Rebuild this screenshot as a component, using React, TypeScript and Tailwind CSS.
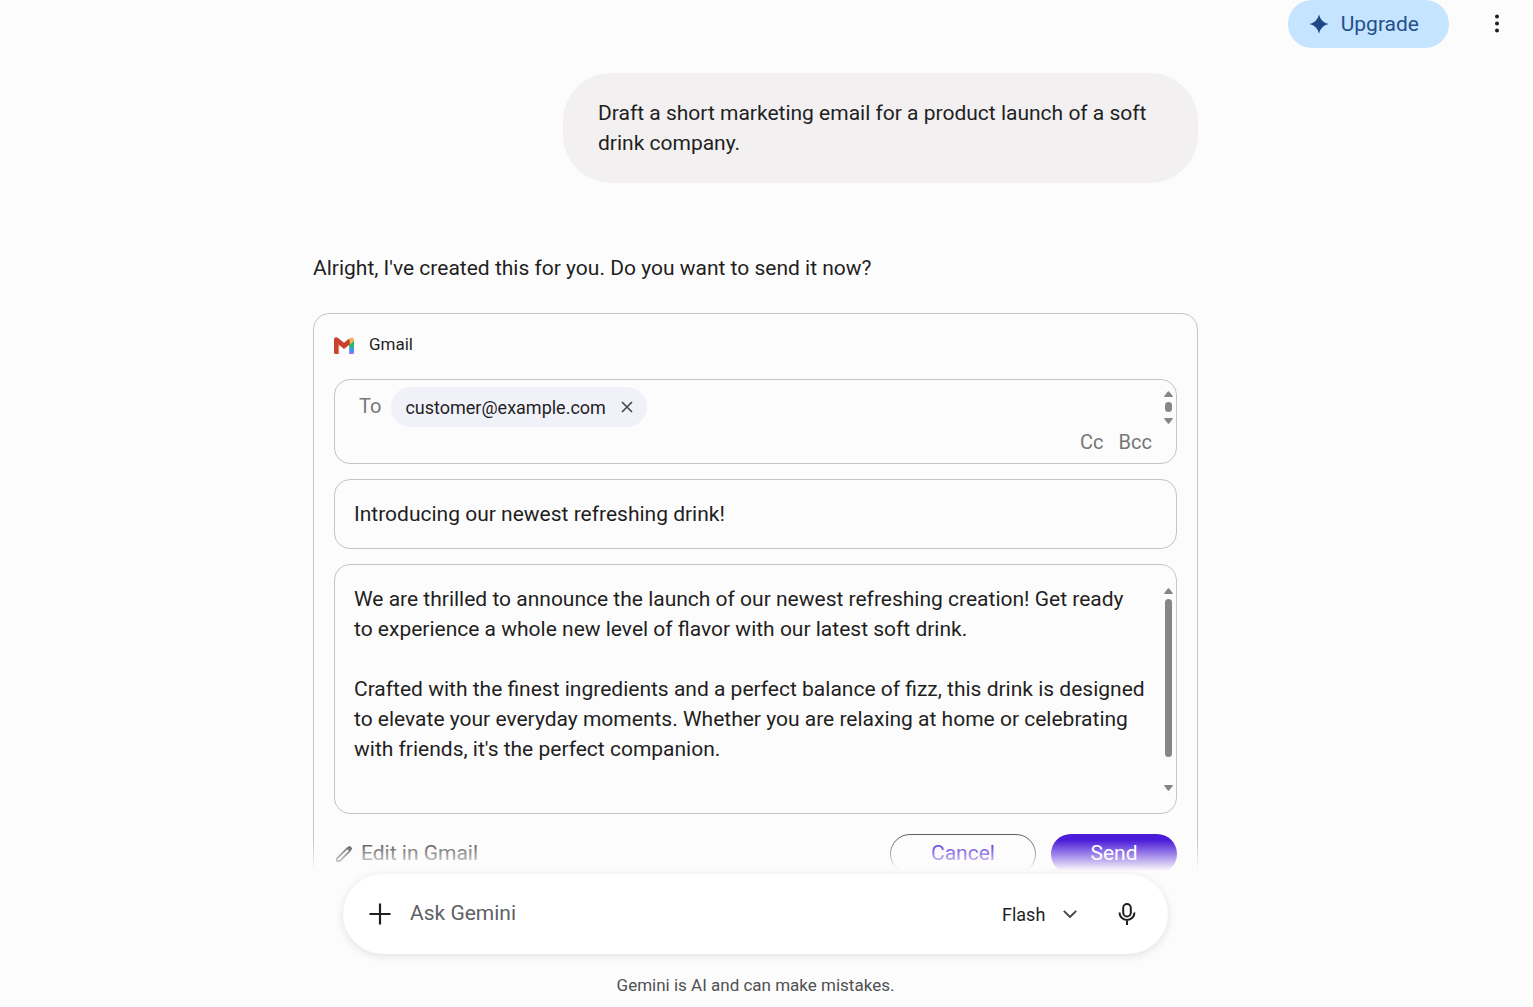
import { useState } from 'react';
import type { ReactNode } from 'react';

const BODY = `We are thrilled to announce the launch of our newest refreshing creation! Get ready to experience a whole new level of flavor with our latest soft drink.

Crafted with the finest ingredients and a perfect balance of fizz, this drink is designed to elevate your everyday moments. Whether you are relaxing at home or celebrating with friends, it's the perfect companion.`;

function GmailIcon() {
  return (
    <svg viewBox="0 0 20 17" className="h-[17px] w-5" aria-hidden="true">
      <path d="M3.800 7 5.200 8.200V17H3.800z" fill="#f0b27a" />
      <path d="M15.200 6.200 20 2.800V11h-4.800z" fill="#1fc063" />
      <path d="M15.200 10.500H20V15a2 2 0 0 1-2 2h-2.800z" fill="#4f8df0" />
      <path d="M16.200 15.200H20a1.900 1.900 0 0 1-2 1.800h-2.800z" fill="#9a6cf0" />
      <path d="M14 3.400 16.400 1a2.200 2.200 0 0 1 3.600 1.700c0 1-.3 1.600-1 2.200l-3.400 2.900z" fill="#efb45c" />
      <path
        d="M0 2.300C0 .4 2.200-.5 3.700.7L10 5.800l5.200-4.200.9 5.600L10 12 4.400 7.600V17H1.500A1.500 1.500 0 0 1 0 15.500z"
        fill="#cb412f"
      />
    </svg>
  );
}

function Arrow({ down = false }: { down?: boolean }) {
  return (
    <svg viewBox="0 0 9 6" className={down ? 'h-[6px] w-[9px] rotate-180' : 'h-[6px] w-[9px]'} aria-hidden="true">
      <path d="M3.800.6a.9.9 0 0 1 1.400 0L8.700 5c.3.500.1 1-.5 1H.8c-.6 0-.8-.5-.5-1z" fill="#858688" />
    </svg>
  );
}

function ScrollTrack({ className, children }: { className: string; children: ReactNode }) {
  return (
    <div className={`mr-[3px] flex w-[9px] shrink-0 flex-col items-center ${className}`} aria-hidden="true">
      <Arrow />
      {children}
      <Arrow down />
    </div>
  );
}

function Header() {
  return (
    <header className="flex h-12 shrink-0 items-center justify-end pr-6">
      <button className="flex h-12 items-center gap-3 rounded-full bg-[#c4e4ff] pr-[30px] pl-[21px] text-[21px] leading-[46px] text-[#24508c]">
        <svg viewBox="0 0 20 20" className="h-5 w-5" fill="#1d4a86" aria-hidden="true">
          <path d="M10 .5Q11.800 8.200 19.500 10 11.800 11.800 10 19.500 8.200 11.800.5 10 8.200 8.200 10 .5z" />
        </svg>
        Upgrade
      </button>
      <button aria-label="More options" className="ml-9 flex h-10 w-6 items-center justify-center">
        <svg viewBox="0 0 6 20" className="h-5 w-[6px]" fill="#1f1f1f" aria-hidden="true">
          <circle cx="3" cy="2.500" r="2" />
          <circle cx="3" cy="9.500" r="2" />
          <circle cx="3" cy="16.500" r="2" />
        </svg>
      </button>
    </header>
  );
}

function EmailCard() {
  const [recipients, setRecipients] = useState(['customer@example.com']);
  const [subject, setSubject] = useState('Introducing our newest refreshing drink!');
  const [body, setBody] = useState(BODY);

  return (
    <section className="mt-[30px] rounded-2xl border border-[#c4c5c7] p-5">
      <div className="flex h-[22px] items-center gap-[15px]">
        <GmailIcon />
        <h2 className="text-[17px]">Gmail</h2>
      </div>

      <div className="mt-[23px] rounded-2xl border border-[#c4c5c7] pt-[7px] pb-[6px]">
        <div className="flex h-10 items-center">
          <label htmlFor="to" className="pb-[3px] pl-6 text-[20px] text-[#777777]">
            To
          </label>
          {recipients.map((r) => (
            <span key={r} className="ml-[10px] flex h-10 items-center gap-[15px] rounded-full bg-[#f1f1fa] px-[14px] text-[18px]">
              {r}
              <button
                aria-label={`Remove ${r}`}
                onClick={() => setRecipients(recipients.filter((x) => x !== r))}
              >
                <svg viewBox="0 0 12 12" className="h-3 w-3" stroke="#444746" strokeWidth="1.600" aria-hidden="true">
                  <path d="M1 1l10 10M11 1 1 11" />
                </svg>
              </button>
            </span>
          ))}
          <input id="to" type="text" className="ml-2 min-w-0 flex-1 bg-transparent text-[18px] outline-none" />
          <ScrollTrack className="h-[33px] justify-between">
            <div className="h-[10px] w-[7px] rounded-full bg-[#858688]" />
          </ScrollTrack>
        </div>
        <div className="flex h-[30px] items-center justify-end gap-[15px] pr-6 text-[20px] text-[#777777]">
          <button>Cc</button>
          <button>Bcc</button>
        </div>
      </div>

      <input
        type="text"
        aria-label="Subject"
        value={subject}
        onChange={(e) => setSubject(e.target.value)}
        className="mt-[15px] block h-[70px] w-full rounded-2xl border border-[#c4c5c7] bg-transparent px-[19px] text-[21px] outline-none"
      />

      <div className="mt-[15px] flex rounded-2xl border border-[#c4c5c7]">
        <textarea
          aria-label="Message"
          value={body}
          onChange={(e) => setBody(e.target.value)}
          className="my-[19px] h-[210px] min-w-0 flex-1 resize-none overflow-hidden bg-transparent pl-[19px] pr-[18px] text-[21px] leading-[30px] outline-none"
        />
        <ScrollTrack className="mt-[23px] mb-[22px]">
          <div className="mt-[5px] mb-7 w-[7px] flex-1 rounded-full bg-[#858688]" />
        </ScrollTrack>
      </div>

      <div className="mt-5 flex items-center gap-[15px]">
        <a href="#gmail" className="mr-auto flex items-center gap-[7px] text-[21px] text-[#444746]">
          <svg viewBox="0 0 20 20" className="h-5 w-5" aria-hidden="true">
            <path d="M3 17.200v-2.700L13.500 4l2.700 2.700L5.700 17.200z" fill="none" stroke="#444746" strokeWidth="1.700" strokeLinejoin="round" />
            <path d="M12.500 4.500 14.500 2.500a1.400 1.400 0 0 1 2 0l1.200 1.200a1.400 1.400 0 0 1 0 2l-2 2z" fill="#444746" />
          </svg>
          Edit in Gmail
        </a>
        <button className="h-10 w-[146px] rounded-full border border-[#5f6063] text-[21px] text-[#4a1bd8]">Cancel</button>
        <button className="h-10 w-[126px] rounded-full bg-[#4a1bd8] text-[21px] text-white">Send</button>
      </div>
    </section>
  );
}

function Composer() {
  const [prompt, setPrompt] = useState('');

  return (
    <footer className="shrink-0 px-4 pt-[3px] pb-[10px] pr-[38px]">
      <form
        onSubmit={(e) => e.preventDefault()}
        className="relative mx-auto flex h-20 max-w-[825px] items-center rounded-full bg-white pl-[26px] pr-[31px] shadow-[0_2px_8px_rgba(0,0,0,0.11)]"
      >
        <button type="button" aria-label="Add files">
          <svg viewBox="0 0 22 22" className="h-[22px] w-[22px]" stroke="#1f1f1f" strokeWidth="2.200" aria-hidden="true">
            <path d="M11 .5v21M.5 11h21" />
          </svg>
        </button>
        <input
          type="text"
          aria-label="Ask Gemini"
          placeholder="Ask Gemini"
          value={prompt}
          onChange={(e) => setPrompt(e.target.value)}
          className="ml-[19px] h-[30px] min-w-0 flex-1 bg-transparent text-[21px] outline-none placeholder:text-[#606164]"
        />
        <div className="relative flex items-center">
          <select aria-label="Model" className="w-[75px] appearance-none bg-transparent text-[18px] outline-none">
            <option>Flash</option>
            <option>Pro</option>
          </select>
          <svg
            viewBox="0 0 14 8"
            className="pointer-events-none absolute right-0 h-2 w-[14px]"
            fill="none"
            stroke="#444746"
            strokeWidth="1.900"
            aria-hidden="true"
          >
            <path d="M.8.8 7 7 13.200.8" />
          </svg>
        </div>
        <button type="button" aria-label="Use microphone" className="ml-10">
          <svg viewBox="0 0 20 22" className="h-[22px] w-5" fill="none" stroke="#1f1f1f" strokeWidth="2" aria-hidden="true">
            <rect x="6.200" y="1" width="7.600" height="12.500" rx="3.800" />
            <path d="M2.500 9.500a7.500 7.500 0 0 0 15 0M10 17v5" />
          </svg>
        </button>
      </form>
      <p className="mt-[19px] text-center text-[17px] leading-6 text-[#505154]">Gemini is AI and can make mistakes.</p>
    </footer>
  );
}

export default function App() {
  return (
    <div className="flex h-screen flex-col overflow-hidden bg-[#fdfcfc] font-['Roboto','Open_Sans',sans-serif] text-[#1f1f1f]">
      <Header />
      <main className="relative min-h-0 flex-1 overflow-hidden pr-[22px]">
        <div className="mx-auto flex max-w-[885px] flex-col pt-[25px]">
          <p className="max-w-[635px] self-end rounded-[48px] bg-[#f2f0f1] px-[35px] py-[25px] text-[21px] leading-[30px]">
            Draft a short marketing email for a product launch of a soft drink company.
          </p>
          <p className="mt-[70px] text-[21px] leading-[30px]">
            Alright, I've created this for you. Do you want to send it now?
          </p>
          <EmailCard />
        </div>
        {/* fades the card out behind the prompt bar */}
        <div className="pointer-events-none absolute inset-x-0 bottom-0 h-[31px] bg-linear-to-b from-[#fdfcfc]/0 to-[#fdfcfc]" />
      </main>
      <Composer />
    </div>
  );
}
